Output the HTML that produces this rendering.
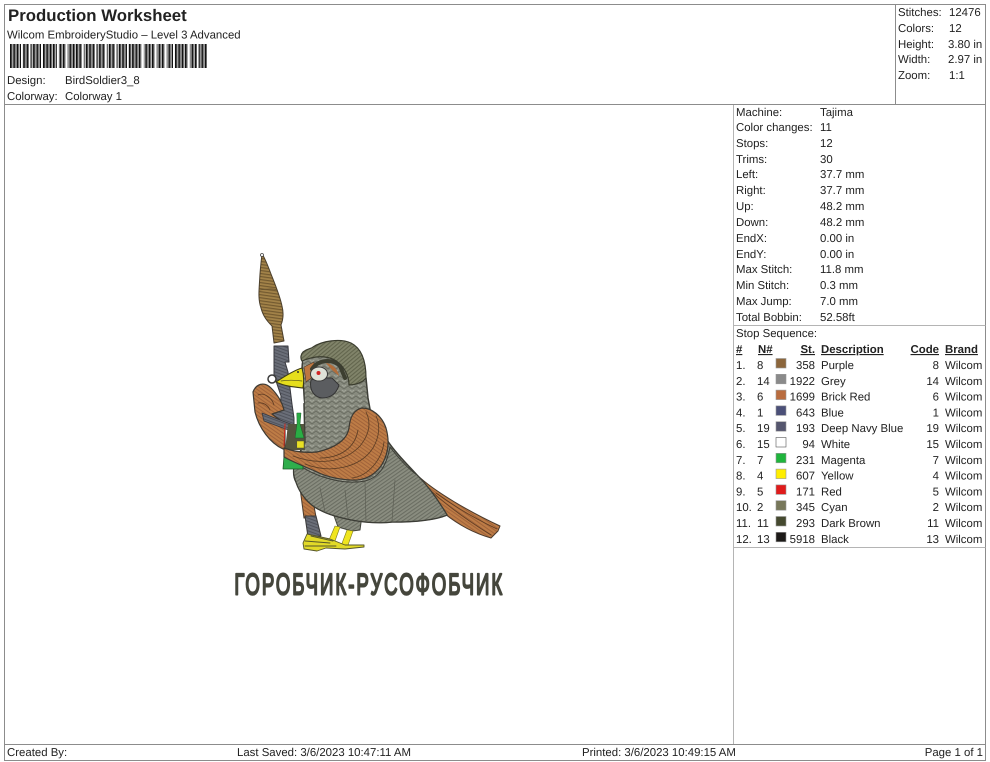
<!DOCTYPE html>
<html lang="en">
<head>
<meta charset="utf-8">
<title>Production Worksheet</title>
<style>
html,body{margin:0;padding:0;background:#fff;width:990px;height:762px;overflow:hidden}
svg{display:block}
text{font-family:"Liberation Sans",Arial,sans-serif;font-size:11.4px;fill:#222;text-rendering:geometricPrecision}
.b{font-weight:bold}
.r{text-anchor:end}
.u{font-weight:bold;text-decoration:underline}
</style>
</head>
<body>
<svg width="990" height="762" viewBox="0 0 990 762" xmlns="http://www.w3.org/2000/svg">
<defs>
<pattern id="oS" width="3" height="3" patternUnits="userSpaceOnUse" patternTransform="rotate(35)">
<rect width="3" height="3" fill="#bd7c46"/><rect width="3" height="1" fill="#a1633a"/>
</pattern>
<pattern id="hS" width="3" height="3" patternUnits="userSpaceOnUse" patternTransform="rotate(-40)">
<rect width="3" height="3" fill="#81846a"/><rect width="3" height="1.1" fill="#62654d"/>
</pattern>
<pattern id="wS" width="3" height="3" patternUnits="userSpaceOnUse" patternTransform="rotate(8)">
<rect width="3" height="3" fill="#a38349"/><rect width="3" height="1.2" fill="#735a30"/>
</pattern>
<pattern id="gS" width="8" height="5" patternUnits="userSpaceOnUse">
<rect width="8" height="5" fill="#888b7f"/>
<path d="M0 4L4 1L8 4" fill="none" stroke="#6a6d62" stroke-width="1"/>
<path d="M0 1.5L2 0M6 0L8 1.5" fill="none" stroke="#a5a89c" stroke-width=".8"/>
</pattern>
<pattern id="dS" width="3" height="3" patternUnits="userSpaceOnUse" patternTransform="rotate(-35)">
<rect width="3" height="3" fill="#8a8d80"/><rect width="3" height="1.1" fill="#6a6d62"/>
</pattern>
<pattern id="nS" width="3" height="3" patternUnits="userSpaceOnUse" patternTransform="rotate(20)">
<rect width="3" height="3" fill="#6a6e78"/><rect width="3" height="1" fill="#50535c"/>
</pattern>
<pattern id="bc" width="3.3" height="24" patternUnits="userSpaceOnUse" x="10" y="44">
<rect width="3.3" height="24" fill="#e4e4e4"/><rect width="1.7" height="24" fill="#111"/><rect x="1.7" width=".9" height="24" fill="#777"/>
</pattern>
</defs>

<!-- frame -->
<g fill="none" stroke="#8c8c8c" stroke-width="1">
<rect x="4.5" y="4.5" width="981" height="756"/>
<path d="M4.5 104.5H985.5M4.5 744.5H985.5M895.5 4.5V104.5"/>
</g>
<path d="M733.5 105V744M733.5 325.5H985.5M733.5 547.5H985.5" fill="none" stroke="#b4b4b4"/>

<!-- header -->
<text x="8" y="21" class="b" style="font-size:16.8px" fill="#111">Production Worksheet</text>
<text x="7" y="38.500">Wilcom EmbroideryStudio – Level 3 Advanced</text>
<rect x="10" y="44" width="197" height="24" fill="url(#bc)"/>
<g fill="#fff">
<rect x="21" y="44" width="1.600" height="24"/><rect x="29" y="44" width="1.500" height="24"/><rect x="41" y="44" width="1.800" height="24"/><rect x="57" y="44" width="1.800" height="24"/><rect x="66" y="44" width="1.500" height="24"/><rect x="82" y="44" width="1.800" height="24"/><rect x="95" y="44" width="1.500" height="24"/><rect x="105" y="44" width="1.800" height="24"/><rect x="115" y="44" width="1.600" height="24"/><rect x="127" y="44" width="1.600" height="24"/><rect x="142" y="44" width="1.800" height="24"/><rect x="155" y="44" width="1.600" height="24"/><rect x="165" y="44" width="1.600" height="24"/><rect x="173" y="44" width="1.600" height="24"/><rect x="188" y="44" width="1.800" height="24"/><rect x="197" y="44" width="1.600" height="24"/>
</g>
<text x="7" y="84">Design:</text><text x="65" y="84">BirdSoldier3_8</text>
<text x="7" y="100">Colorway:</text><text x="65" y="100">Colorway 1</text>

<text x="898" y="16">Stitches:</text><text x="949" y="16">12476</text>
<text x="898" y="32">Colors:</text><text x="949" y="32">12</text>
<text x="898" y="48">Height:</text><text x="948" y="48">3.80 in</text>
<text x="898" y="63">Width:</text><text x="948" y="63">2.97 in</text>
<text x="898" y="79">Zoom:</text><text x="949" y="79">1:1</text>

<!-- machine data -->
<text x="736" y="116">Machine:</text><text x="820" y="116">Tajima</text>
<text x="736" y="131">Color changes:</text><text x="820" y="131">11</text>
<text x="736" y="147">Stops:</text><text x="820" y="147">12</text>
<text x="736" y="163">Trims:</text><text x="820" y="163">30</text>
<text x="736" y="178">Left:</text><text x="820" y="178">37.7 mm</text>
<text x="736" y="194">Right:</text><text x="820" y="194">37.7 mm</text>
<text x="736" y="210">Up:</text><text x="820" y="210">48.2 mm</text>
<text x="736" y="226">Down:</text><text x="820" y="226">48.2 mm</text>
<text x="736" y="242">EndX:</text><text x="820" y="242">0.00 in</text>
<text x="736" y="258">EndY:</text><text x="820" y="258">0.00 in</text>
<text x="736" y="273">Max Stitch:</text><text x="820" y="273">11.8 mm</text>
<text x="736" y="289">Min Stitch:</text><text x="820" y="289">0.3 mm</text>
<text x="736" y="305">Max Jump:</text><text x="820" y="305">7.0 mm</text>
<text x="736" y="321">Total Bobbin:</text><text x="820" y="321">52.58ft</text>
<text x="736" y="337">Stop Sequence:</text>

<!-- stop table -->
<text x="736" y="353" class="u">#</text><text x="758" y="353" class="u">N#</text><text x="815" y="353" class="u r">St.</text><text x="821" y="353" class="u">Description</text><text x="939" y="353" class="u r">Code</text><text x="945" y="353" class="u">Brand</text>

<g stroke="#9a9a9a" stroke-width=".6">
<rect x="776" y="358.500" width="10" height="9.500" fill="#8c663c"/>
<rect x="776" y="374.300" width="10" height="9.500" fill="#8a8a8a"/>
<rect x="776" y="390.100" width="10" height="9.500" fill="#b96c3e"/>
<rect x="776" y="405.900" width="10" height="9.500" fill="#4b5078"/>
<rect x="776" y="421.700" width="10" height="9.500" fill="#55566e"/>
<rect x="776" y="437.500" width="10" height="9.500" fill="#fff" stroke="#555"/>
<rect x="776" y="453.300" width="10" height="9.500" fill="#1fb53c"/>
<rect x="776" y="469.100" width="10" height="9.500" fill="#ffee00"/>
<rect x="776" y="484.900" width="10" height="9.500" fill="#e01b1b"/>
<rect x="776" y="500.700" width="10" height="9.500" fill="#77775a"/>
<rect x="776" y="516.500" width="10" height="9.500" fill="#45492f"/>
<rect x="776" y="532.300" width="10" height="9.500" fill="#1c1a18"/>
</g>

<text x="736" y="369">1.</text><text x="757" y="369">8</text><text x="815" y="369" class="r">358</text><text x="821" y="369">Purple</text><text x="939" y="369" class="r">8</text><text x="945" y="369">Wilcom</text>
<text x="736" y="384.800">2.</text><text x="757" y="384.800">14</text><text x="815" y="384.800" class="r">1922</text><text x="821" y="384.800">Grey</text><text x="939" y="384.800" class="r">14</text><text x="945" y="384.800">Wilcom</text>
<text x="736" y="400.600">3.</text><text x="757" y="400.600">6</text><text x="815" y="400.600" class="r">1699</text><text x="821" y="400.600">Brick Red</text><text x="939" y="400.600" class="r">6</text><text x="945" y="400.600">Wilcom</text>
<text x="736" y="416.400">4.</text><text x="757" y="416.400">1</text><text x="815" y="416.400" class="r">643</text><text x="821" y="416.400">Blue</text><text x="939" y="416.400" class="r">1</text><text x="945" y="416.400">Wilcom</text>
<text x="736" y="432.200">5.</text><text x="757" y="432.200">19</text><text x="815" y="432.200" class="r">193</text><text x="821" y="432.200">Deep Navy Blue</text><text x="939" y="432.200" class="r">19</text><text x="945" y="432.200">Wilcom</text>
<text x="736" y="448">6.</text><text x="757" y="448">15</text><text x="815" y="448" class="r">94</text><text x="821" y="448">White</text><text x="939" y="448" class="r">15</text><text x="945" y="448">Wilcom</text>
<text x="736" y="463.800">7.</text><text x="757" y="463.800">7</text><text x="815" y="463.800" class="r">231</text><text x="821" y="463.800">Magenta</text><text x="939" y="463.800" class="r">7</text><text x="945" y="463.800">Wilcom</text>
<text x="736" y="479.600">8.</text><text x="757" y="479.600">4</text><text x="815" y="479.600" class="r">607</text><text x="821" y="479.600">Yellow</text><text x="939" y="479.600" class="r">4</text><text x="945" y="479.600">Wilcom</text>
<text x="736" y="495.400">9.</text><text x="757" y="495.400">5</text><text x="815" y="495.400" class="r">171</text><text x="821" y="495.400">Red</text><text x="939" y="495.400" class="r">5</text><text x="945" y="495.400">Wilcom</text>
<text x="736" y="511.200">10.</text><text x="757" y="511.200">2</text><text x="815" y="511.200" class="r">345</text><text x="821" y="511.200">Cyan</text><text x="939" y="511.200" class="r">2</text><text x="945" y="511.200">Wilcom</text>
<text x="736" y="527">11.</text><text x="757" y="527">11</text><text x="815" y="527" class="r">293</text><text x="821" y="527">Dark Brown</text><text x="939" y="527" class="r">11</text><text x="945" y="527">Wilcom</text>
<text x="736" y="542.800">12.</text><text x="757" y="542.800">13</text><text x="815" y="542.800" class="r">5918</text><text x="821" y="542.800">Black</text><text x="939" y="542.800" class="r">13</text><text x="945" y="542.800">Wilcom</text>

<!-- footer -->
<text x="7" y="756">Created By:</text>
<text x="237" y="756">Last Saved: 3/6/2023 10:47:11 AM</text>
<text x="582" y="756">Printed: 3/6/2023 10:49:15 AM</text>
<text x="983" y="756" class="r">Page 1 of 1</text>

<!-- bird artwork -->
<g stroke-linejoin="round" stroke-linecap="round">
<!-- tail -->
<path d="M417 475C435 492 470 512 500 526L498 531L491 538C470 532 455 522 445 514Z" fill="url(#oS)" stroke="#4a3a2c" stroke-width="1"/>
<path d="M425 485C445 505 470 522 491 535M436 493C455 507 478 520 497 529" fill="none" stroke="#5d3b22" stroke-width=".8"/>
<!-- near leg -->
<path d="M300 488L310 484L316 517L304 518Z" fill="url(#oS)" stroke="#4a3a2c"/>
<path d="M305 516L316 516L321 536L308 537Z" fill="url(#nS)" stroke="#3a3a3a"/>
<!-- thigh feathers -->
<path d="M333 513L362 515L360 530L352 531L338 527Z" fill="url(#dS)" stroke="#44463e"/>
<!-- yellow legs -->
<path d="M335 526L340 527L335 541L329 540ZM347 530L353 531L347 548L341 546Z" fill="#f0e51e" stroke="#7d7a1e" stroke-width=".6"/>
<!-- feet -->
<path d="M307 534L330 539L345 545L364 545L364 547L345 549L326 548L317 551L304 549L303 543Z" fill="#e2da28" stroke="#55552a" stroke-width=".9"/>
<path d="M305 541L330 543M305 546L336 546M311 536L333 541" fill="none" stroke="#57572a" stroke-width=".9"/>
<!-- body -->
<path d="M303 360C300 372 305 384 304 405L305 442L300 452C293 462 292 475 296 482C300 494 309 505 320 510C333 517 365 525 392 522C415 522 435 520 447 515C438 500 428 486 417 475C405 462 395 452 387 440L372 420L368 398L366 378L350 360Z" fill="url(#gS)" stroke="#3c3d36" stroke-width="1.500"/>
<path d="M295 462C315 478 345 485 365 481C378 478 386 468 390 447C400 460 410 470 417 475C428 486 438 500 447 515C435 520 415 522 392 522C365 525 333 517 320 510C309 505 300 494 296 482C293 475 293 468 295 462Z" fill="url(#dS)" stroke="#3c3d36" stroke-width="1"/>
<path d="M365 482L366 522M395 480L392 521M320 488L325 512M345 490L348 518" fill="none" stroke="#5c5e54" stroke-width=".7"/>
<!-- launcher: warhead -->
<path d="M262 254C265 258 268 266 271 274C275 284 280 296 282 306C284 314 283 320 281 325L284 341L274 343L272 326C267 321 263 316 261 308C258 300 259 290 259.500 282C260 272 261 262 262 254Z" fill="url(#wS)" stroke="#4b3f2c" stroke-width="1"/>
<circle cx="262" cy="255" r="1.500" fill="#fff" stroke="#444" stroke-width=".8"/>
<path d="M260 290C266 289 273 288 277 290" fill="none" stroke="#5c4a2b" stroke-width=".6"/>
<!-- gun -->
<path d="M274 346L288 346L289 362L285 362L288 372L292 404L294 418L294 430L284 428L280 424L262 420L260 410L280 412L281 396L274 375Z" fill="url(#nS)" stroke="#38393f" stroke-width="1"/>
<circle cx="272" cy="379" r="4" fill="#fff" stroke="#3a3a3a" stroke-width="1.500"/>
<!-- white gap -->
<path d="M293 387L302 387L304 403L295 404Z" fill="#fff"/>
<!-- hand & arm -->
<path d="M253 392C256 384 264 381 271 388C277 394 282 402 284 410L272 414L285 424L285 449L283 449C270 443 259 428 255 412Z" fill="url(#oS)" stroke="#3d3a33" stroke-width="1.200"/>
<path d="M262 413L293 425L291 431L264 421Z" fill="url(#nS)" stroke="#38393f" stroke-width=".8"/>
<path d="M258 395C264 392 272 398 274 405M258 403C263 402 268 405 270 410" fill="none" stroke="#5d3b22" stroke-width=".8"/>
<!-- strap, bottle -->
<path d="M285 424L284 446" fill="none" stroke="#d22a1e" stroke-width="1"/>
<path d="M288 424L304 424L305 450L285 450Z" fill="#55553f"/>
<path d="M297 413L301 413L300 424L304 438L295 438L297 424Z" fill="#2aad44" stroke="#1d5c2a" stroke-width=".5"/>
<path d="M297 441L304 441L304 448L297 448Z" fill="#e9e025" stroke="#55552a" stroke-width=".5"/>
<path d="M284 456L303 466L303 469L283 469Z" fill="#2fae4c" stroke="#1d5c2a" stroke-width=".8"/>
<!-- wing -->
<path d="M362 408C372 408 382 416 386 428C390 442 388 455 381 466C373 477 362 481 350 480C337 479 325 476 317 472C306 467 293 462 284 457L284 448C295 452 306 453 317 452C335 448 347 440 349 428C350 418 353 410 362 408Z" fill="url(#oS)" stroke="#3d3a33" stroke-width="1.200"/>
<path d="M293 456C320 466 345 462 360 446C368 436 372 424 366 412M305 464C330 474 360 468 373 448C380 436 380 424 376 416M352 478C368 476 382 460 384 442M320 458C340 458 355 448 358 430" fill="none" stroke="#5c3d24" stroke-width=".8"/>
<!-- face -->
<path d="M303 360C312 354 330 352 342 362C350 370 352 380 350 388C345 394 335 400 322 398C312 396 306 388 304 380Z" fill="url(#gS)"/>
<path d="M304 367L314 362L314 376L306 382Z" fill="#bd7640" stroke="#4a3a2c" stroke-width=".6"/>
<path d="M311 380C309 390 314 397 322 398C332 398 337 392 339 385L332 378L316 378Z" fill="#5b5d60" stroke="#333" stroke-width="1"/>
<path d="M312 369C318 360 332 358 340 366L345 378" fill="none" stroke="#3c3e30" stroke-width="4"/>
<path d="M326 363C333 364 338 370 339 376L332 370Z" fill="#b26d3a"/>
<ellipse cx="319" cy="374" rx="8.500" ry="7" fill="#dfe2d8" stroke="#3a3a3a" stroke-width="1"/>
<circle cx="318.500" cy="373" r="2" fill="#d12525"/>
<!-- helmet -->
<path d="M303 352C308 348 311 349 313 347C322 341 340 338 351 343C361 348 366 360 366 378L363 381C358 384 353 385 349 385C349 378 346 370 340 364C332 356 318 354 302 361C300 358 301 354 303 352Z" fill="url(#hS)" stroke="#3a3c2e" stroke-width="1.200"/>
<!-- beak -->
<path d="M276 382C285 376 295 370 302 368C304 375 304 382 303 388C294 387 284 386 276 382Z" fill="#e6de1c" stroke="#3d3b18" stroke-width="1.100"/>
<path d="M281 381C287 380 295 380 302 381" fill="none" stroke="#55521a" stroke-width=".7"/>
<circle cx="298" cy="372" r="1" fill="#333"/>
<!-- slogan -->
<g transform="scale(.62 1)">
<text x="378" y="594.500" textLength="432" lengthAdjust="spacing" style="font-size:30px;fill:#45463c;stroke:#45463c;stroke-width:2px">ГОРОБЧИК-РУСОФОБЧИК</text>
</g>
</g>
</svg>
</body>
</html>
